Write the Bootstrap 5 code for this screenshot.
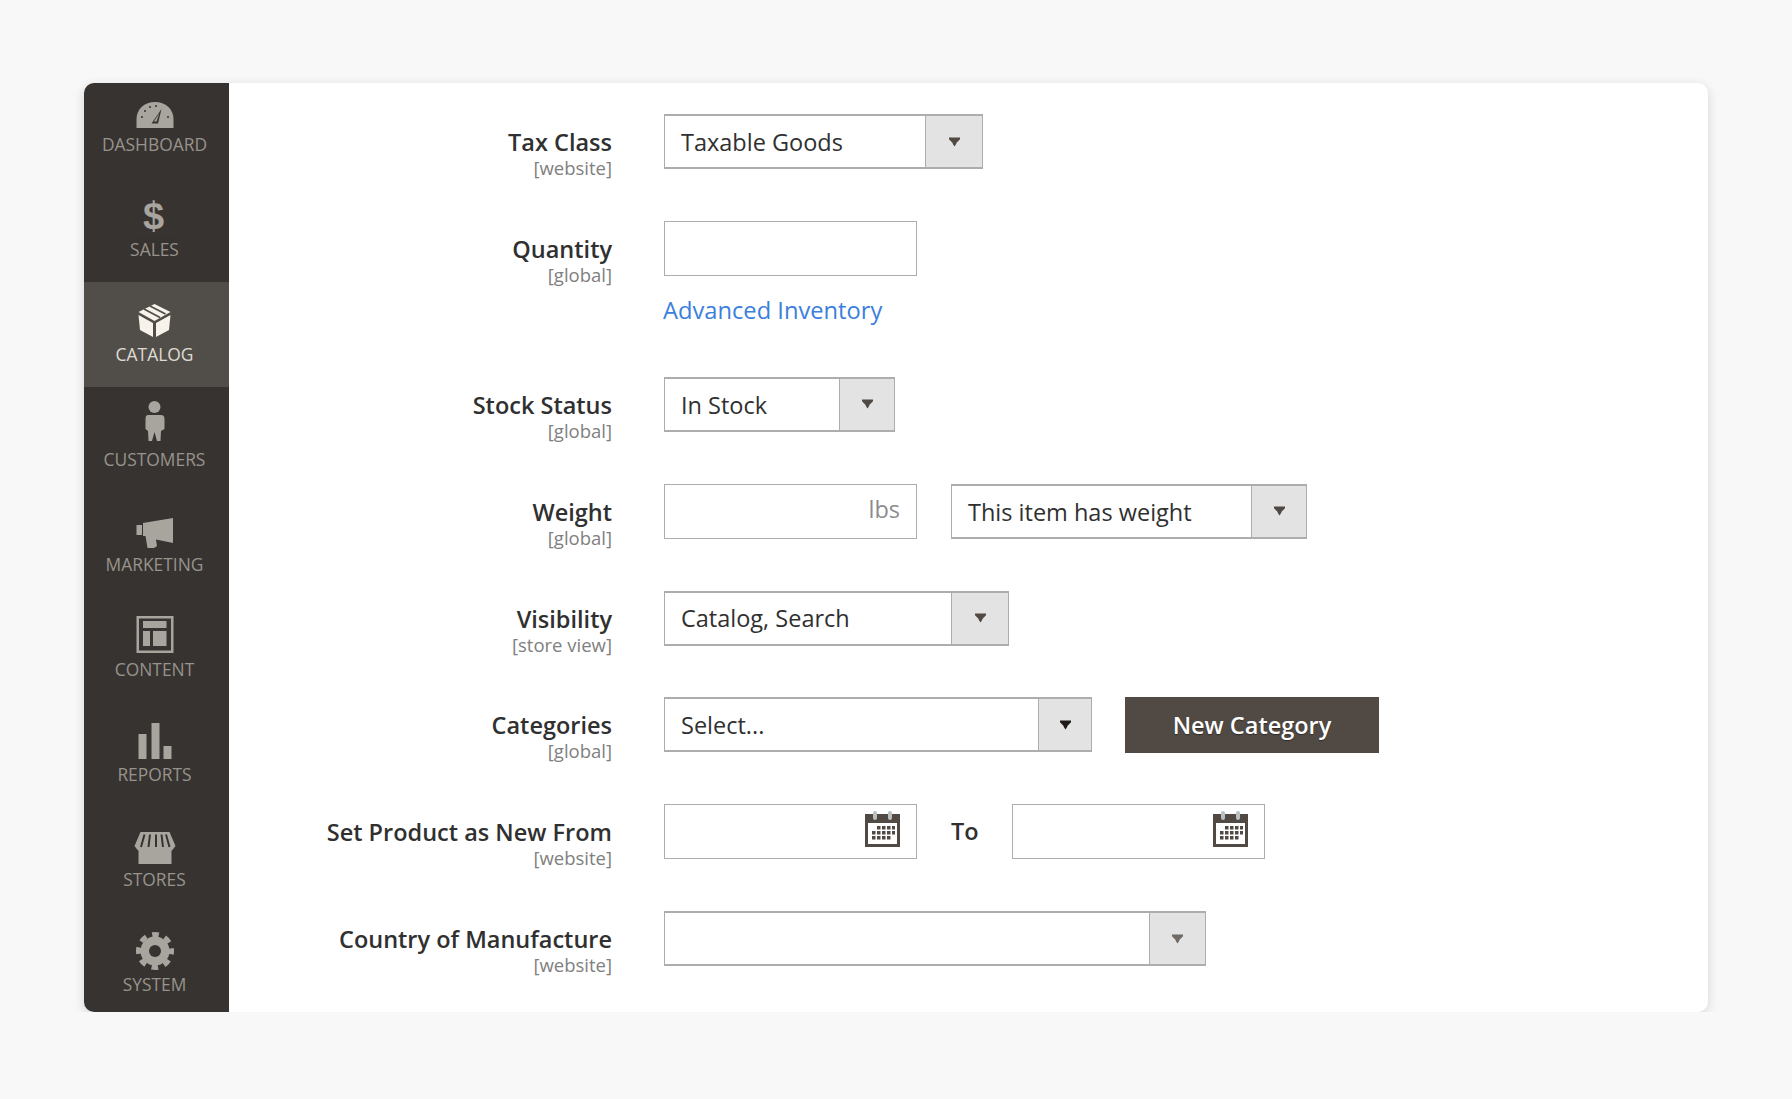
<!DOCTYPE html>
<html lang="en">
<head>
<meta charset="utf-8">
<title>Catalog</title>
<link href="https://cdn.jsdelivr.net/npm/bootstrap@5.3.0/dist/css/bootstrap.min.css" rel="stylesheet">
<style>
body{background:#f8f8f8;font-family:"Open Sans",sans-serif;color:#303030;}
.page-wrap{padding:83px 84px 0;}
.panel{width:1624px;height:929px;border-radius:10px;box-shadow:0 3px 12px rgba(0,0,0,.14);}
.side{width:145px;background:#373330;}
.side-in{margin-top:-11px;}
.side-item{height:105px;padding:14px 4px 0 0;color:#a8a49e;text-decoration:none;}
.side-item.on{background:#514d48;color:#f7f3eb;}
.side-item svg{width:46px;height:46px;display:block;fill:currentColor;}
.side-lbl{font-size:17.4px;line-height:24px;font-weight:400;opacity:.85;}
.form-area{padding:31px 0 0;}
.f-row{height:55px;margin-bottom:51.9px;}
.f-row-tall{height:104px;}
.f-label{width:383px;height:55px;margin-right:52px;padding-top:13px;flex:none;}
.f-name{font-size:23.5px;line-height:30px;font-weight:600;color:#303030;}
.f-scope{font-size:18.5px;line-height:22px;color:#808080;}
.sel-box{height:55px;background:#fff;border:1px solid #adadad;border-top-width:2px;border-bottom-width:2px;font-size:23.5px;color:#303030;}
.sel-text{padding:2px 0 0 16px;white-space:nowrap;}
.sel-btn{background:#e3e3e3;border-left:1px solid #adadad;}
.sel-btn svg{width:11px;height:10px;fill:#514943;}
.sel-btn svg.arr-dark{fill:#1f1a17;}
.sel-btn svg.arr-light{fill:#6f6a65;}
.btn-w53{width:53px}.btn-w55{width:55px}.btn-w56{width:56px}.btn-w57{width:57px}
.w-tax{width:319px}.w-stock{width:231px}.w-weight{width:356px}.w-vis{width:345px}.w-cat{width:428px}.w-country{width:542px}
.txt-box{width:253px;height:55px;background:#fff;border:1px solid #adadad;padding-right:16px;}
.txt-box input{border:0;outline:0;min-width:0;background:transparent;padding:0 16px;font-size:23.5px;}
.unit{font-size:23.5px;color:#8c8c8c;margin-top:-3px;}
.cal{width:35px;height:36px;flex:none;margin-top:-5px;}
.adv{display:block;font-size:23.7px;line-height:30px;color:#3a80dc;text-decoration:none;margin-top:19px;margin-left:-1px;}
.gap-fields{gap:34px;}
.gap-btn{gap:33px;}
.to-lbl{font-size:23.5px;font-weight:600;color:#303030;width:27px;}
.btn.new-cat{width:254px;height:56px;background:#514943;border:0;border-radius:0;color:#fff;font-size:23.5px;font-weight:600;padding:0;text-shadow:0 1px 1px rgba(0,0,0,.4);}
</style>
</head>
<body>
<svg width="0" height="0" class="position-absolute">
  <defs>
    <symbol id="arr" viewBox="0 0 12 10"><path d="M0 0H12V2L8 6V7L6 10L4 7V6L0 2Z"/></symbol>
    <symbol id="calicon" viewBox="0 0 35 36">
      <rect x="0" y="3" width="35" height="33" fill="#514943"/>
      <rect x="3" y="12" width="29" height="21" fill="#fff"/>
      <rect x="8" y="0" width="4" height="9" rx="2" fill="#b9c0c4"/><rect x="23" y="0" width="4" height="9" rx="2" fill="#b9c0c4"/>
      <g fill="#514943">
        <rect x="12" y="15" width="3.500" height="3.500"/><rect x="17" y="15" width="3.500" height="3.500"/><rect x="22" y="15" width="3.500" height="3.500"/><rect x="27" y="15" width="3" height="3.500"/>
        <rect x="7" y="20" width="3.500" height="3.500"/><rect x="12" y="20" width="3.500" height="3.500"/><rect x="17" y="20" width="3.500" height="3.500"/><rect x="22" y="20" width="3.500" height="3.500"/><rect x="27" y="20" width="3" height="3.500"/>
        <rect x="7" y="25" width="3.500" height="3.500"/><rect x="12" y="25" width="3.500" height="3.500"/><rect x="17" y="25" width="3.500" height="3.500"/><rect x="22" y="25" width="3.500" height="3.500"/>
      </g>
    </symbol>
  </defs>
</svg>
<div class="page-wrap">
  <div class="panel d-flex bg-white overflow-hidden">
    <nav class="side flex-shrink-0">
      <div class="side-in d-flex flex-column">
        <a class="side-item d-flex flex-column align-items-center" href="#">
          <svg viewBox="0 0 46 46"><path d="M4.500 42V33C4.500 23 12.500 16 23 16S41.500 23 41.500 33V42Z"/><g fill="#373330"><circle cx="10" cy="31" r="1"/><circle cx="13" cy="25" r="1"/><circle cx="18" cy="21" r="1"/><circle cx="24" cy="20" r="1"/><circle cx="36" cy="31" r="1"/><path d="M29.500 23L26 37.500H19.500Z"/></g><path d="M27.500 27L24.500 35.500H22Z"/></svg>
          <span class="side-lbl">DASHBOARD</span>
        </a>
        <a class="side-item d-flex flex-column align-items-center" href="#">
          <svg viewBox="0 0 46 46"><text x="21.500" y="38" text-anchor="middle" font-family="Liberation Sans" font-weight="700" font-size="38">$</text></svg>
          <span class="side-lbl">SALES</span>
        </a>
        <a class="side-item on d-flex flex-column align-items-center" href="#">
          <svg viewBox="0 0 46 46"><path d="M22.500 8L38.500 16L22.500 25L6.500 16Z"/><path d="M6.500 19L21 27V41L8 34Z"/><path d="M38.500 19L24 27V41L37 34Z"/><path d="M12 13L28 21.500M18 10L33.500 18" stroke="#514d48" stroke-width="1.800" fill="none"/></svg>
          <span class="side-lbl">CATALOG</span>
        </a>
        <a class="side-item d-flex flex-column align-items-center" href="#">
          <svg viewBox="0 0 46 46"><circle cx="22.500" cy="6" r="6"/><path d="M16 14H29Q32.500 14 32.500 18V28L29 30L28.500 40H25L22.500 31L20 40H16.500L16 30L13.500 28V18Q13.500 14 16 14Z"/></svg>
          <span class="side-lbl">CUSTOMERS</span>
        </a>
        <a class="side-item d-flex flex-column align-items-center" href="#">
          <svg viewBox="0 0 46 46"><path d="M4.500 19H10V29H4.500Z"/><path d="M11 17L41 12V37L24 33.500L25 40L22 42H15.500L13.500 30H11Z"/></svg>
          <span class="side-lbl">MARKETING</span>
        </a>
        <a class="side-item d-flex flex-column align-items-center" href="#">
          <svg viewBox="0 0 46 46"><path fill-rule="evenodd" d="M4.500 5H41.500V42H4.500ZM7 7.500V39.500H39V7.500Z"/><path d="M11 10H34.500V17H11ZM11 20H18V35H11ZM21 20H34.500V35H21Z"/></svg>
          <span class="side-lbl">CONTENT</span>
        </a>
        <a class="side-item d-flex flex-column align-items-center" href="#">
          <svg viewBox="0 0 46 46"><path d="M6.500 18H14.500V43H6.500ZM19.500 7H27.500V43H19.500ZM31.500 30H39.500V43H31.500Z"/></svg>
          <span class="side-lbl">REPORTS</span>
        </a>
        <a class="side-item d-flex flex-column align-items-center" href="#">
          <svg viewBox="0 0 46 46"><path d="M8.500 11H37.500L43.500 25L40 29.500H6L2.500 25Z"/><path d="M6.500 29H39.500V43H6.500Z"/><path d="M12.500 13.500L9 26M18 13.500L16.500 26M24 13.500V26M29.500 13.500L31 26M34 13.500L37.500 26" stroke="#373330" stroke-width="2" fill="none"/></svg>
          <span class="side-lbl">STORES</span>
        </a>
        <a class="side-item d-flex flex-column align-items-center" href="#">
          <svg viewBox="0 0 46 46"><circle cx="23" cy="25" r="14.500"/><circle cx="23" cy="25" r="16.500" fill="none" stroke="currentColor" stroke-width="5" stroke-dasharray="6.700 6.260" stroke-dashoffset="3.350"/><circle cx="23" cy="25" r="6" fill="#373330"/></svg>
          <span class="side-lbl">SYSTEM</span>
        </a>
      </div>
    </nav>
    <main class="form-area flex-grow-1">
      <div class="f-row d-flex">
        <div class="f-label text-end"><div class="f-name">Tax Class</div><div class="f-scope">[website]</div></div>
        <div class="sel-box w-tax d-flex justify-content-between"><span class="sel-text align-self-center">Taxable Goods</span><span class="sel-btn btn-w57 d-flex align-items-center justify-content-center"><svg><use href="#arr"/></svg></span></div>
      </div>
      <div class="f-row f-row-tall d-flex">
        <div class="f-label text-end"><div class="f-name">Quantity</div><div class="f-scope">[global]</div></div>
        <div><div class="txt-box d-flex"><input class="flex-grow-1" type="text" aria-label="Quantity"></div><a class="adv" href="#">Advanced Inventory</a></div>
      </div>
      <div class="f-row d-flex">
        <div class="f-label text-end"><div class="f-name">Stock Status</div><div class="f-scope">[global]</div></div>
        <div class="sel-box w-stock d-flex justify-content-between"><span class="sel-text align-self-center">In Stock</span><span class="sel-btn btn-w55 d-flex align-items-center justify-content-center"><svg><use href="#arr"/></svg></span></div>
      </div>
      <div class="f-row d-flex">
        <div class="f-label text-end"><div class="f-name">Weight</div><div class="f-scope">[global]</div></div>
        <div class="d-flex gap-fields">
          <div class="txt-box d-flex align-items-center"><input class="flex-grow-1" type="text" aria-label="Weight"><span class="unit">lbs</span></div>
          <div class="sel-box w-weight d-flex justify-content-between"><span class="sel-text align-self-center">This item has weight</span><span class="sel-btn btn-w55 d-flex align-items-center justify-content-center"><svg><use href="#arr"/></svg></span></div>
        </div>
      </div>
      <div class="f-row d-flex">
        <div class="f-label text-end"><div class="f-name">Visibility</div><div class="f-scope">[store view]</div></div>
        <div class="sel-box w-vis d-flex justify-content-between"><span class="sel-text align-self-center">Catalog, Search</span><span class="sel-btn btn-w57 d-flex align-items-center justify-content-center"><svg><use href="#arr"/></svg></span></div>
      </div>
      <div class="f-row d-flex">
        <div class="f-label text-end"><div class="f-name">Categories</div><div class="f-scope">[global]</div></div>
        <div class="d-flex gap-btn align-items-start">
          <div class="sel-box w-cat d-flex justify-content-between"><span class="sel-text align-self-center">Select...</span><span class="sel-btn btn-w53 d-flex align-items-center justify-content-center"><svg class="arr-dark"><use href="#arr"/></svg></span></div>
          <button class="btn new-cat" type="button">New Category</button>
        </div>
      </div>
      <div class="f-row d-flex">
        <div class="f-label text-end"><div class="f-name">Set Product as New From</div><div class="f-scope">[website]</div></div>
        <div class="d-flex gap-fields align-items-center">
          <div class="txt-box d-flex align-items-center"><input class="flex-grow-1" type="text" aria-label="From"><svg class="cal"><use href="#calicon"/></svg></div>
          <span class="to-lbl">To</span>
          <div class="txt-box d-flex align-items-center"><input class="flex-grow-1" type="text" aria-label="To"><svg class="cal"><use href="#calicon"/></svg></div>
        </div>
      </div>
      <div class="f-row d-flex">
        <div class="f-label text-end"><div class="f-name">Country of Manufacture</div><div class="f-scope">[website]</div></div>
        <div class="sel-box w-country d-flex justify-content-end"><span class="sel-btn btn-w56 d-flex align-items-center justify-content-center"><svg class="arr-light"><use href="#arr"/></svg></span></div>
      </div>
    </main>
  </div>
</div>
</body>
</html>
